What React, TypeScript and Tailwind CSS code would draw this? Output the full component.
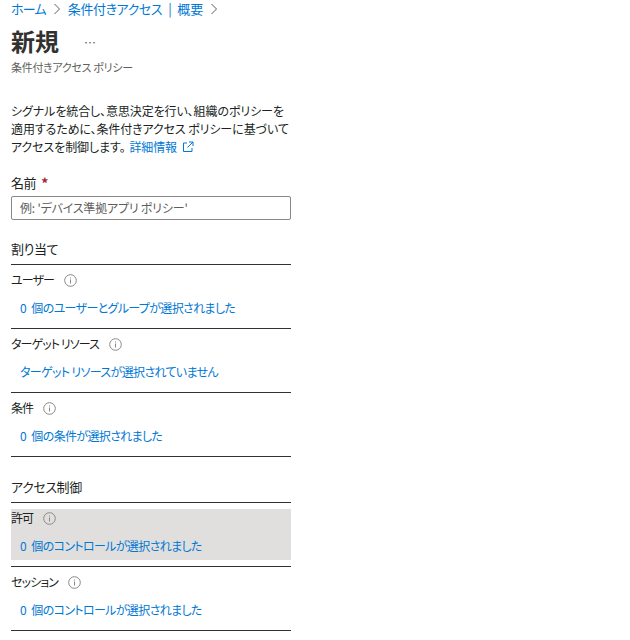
import React from 'react';

const InfoIcon = () => (
  <svg width="13" height="13" viewBox="0 0 13 13" fill="none" className="shrink-0">
    <circle cx="6.5" cy="6.5" r="5.8" stroke="#8a8886" strokeWidth="1" />
    <rect x="6" y="5.5" width="1" height="4" fill="#8a8886" />
    <rect x="6" y="3.5" width="1" height="1" fill="#8a8886" />
  </svg>
);

const Chevron = ({ className }: { className: string }) => (
  <svg width="8" height="12" viewBox="0 0 8 12" fill="none" className={className}>
    <path d="M1.5 1l5 5-5 5" stroke="#605e5c" />
  </svg>
);

const Row = ({ label, value, active }: { label: string; value: string; active?: boolean }) => (
  <div className="h-[64px] border-b border-[#323130] pt-[6px]">
    <div className={active ? 'h-[51px] bg-[#e1dfdd]' : 'h-[51px]'}>
      <div className="flex h-[18px] items-center text-[12px] tracking-[-0.9px] text-[#201f1e]">
        <span>{label}</span>
        <span className="ml-[10px]"><InfoIcon /></span>
      </div>
      <div className="mt-[9px] whitespace-pre pl-[9px] text-[12px] tracking-[-0.65px] text-[#0078d4]">{value}</div>
    </div>
  </div>
);

export default function App() {
  return (
    <div className="h-[640px] w-[630px] overflow-hidden bg-white pl-[11px] text-[13px] leading-[20px] tracking-[-0.4px] [font-family:'Noto_Sans_CJK_JP',sans-serif] [font-feature-settings:'palt']">
      <div className="w-[280px]">
        <nav className="flex h-[18px] items-center text-[#0078d4]">
          <span className="tracking-[-0.8px]">ホーム</span>
          <Chevron className="ml-[7px] mr-[7px]" />
          <span>条件付きアクセス</span>
          <span className="mx-[6px]">|</span>
          <span className="tracking-normal">概要</span>
          <Chevron className="ml-[7px]" />
        </nav>
        <div className="mt-[7px] flex h-[32px] items-center">
          <h1 className="text-[24px] font-bold leading-[32px] tracking-normal text-[#323130]">新規</h1>
          <span className="ml-[25px] mt-[3px] text-[12px] tracking-normal text-[#605e5c]">…</span>
        </div>
        <div className="mt-[2px] text-[11px] leading-[16px] tracking-[-0.3px] text-[#605e5c]">条件付きアクセス ポリシー</div>
        <p className="mt-[27px] whitespace-nowrap text-[12px] leading-[18px] tracking-[-0.1px] text-[#201f1e]">
          シグナルを統合し、意思決定を行い、組織のポリシーを<br />
          適用するために、条件付きアクセス ポリシーに基づいて<br />
          アクセスを制御します。
          <a className="ml-[4px] text-[#0078d4]">詳細情報</a>
          <svg width="12" height="12" viewBox="0 0 12 12" fill="none" className="ml-[5px] inline-block align-[-1px]">
            <path d="M5 2H1.5v8.5H10V7M7 1h4v4M11 1L5.5 6.5" stroke="#0078d4" />
          </svg>
        </p>
        <div className="mt-[17px] flex items-center text-[#201f1e]">
          <span>名前</span>
          <span className="ml-[5px] text-[14px] font-bold text-[#a4262c]">*</span>
        </div>
        <div className="mt-[3px] flex h-[24px] items-center rounded-[2px] border border-[#8a8886] pl-[8px] text-[12px] tracking-[-0.2px] text-[#605e5c]">例: 'デバイス準拠アプリ ポリシー'</div>
        <div className="mt-[19px] h-[26px] border-b border-[#323130] text-[#201f1e]">割り当て</div>
        <Row label="ユーザー" value={'0\u2002個のユーザーとグループが選択されました'} />
        <Row label="ターゲット リソース" value="ターゲット リソースが選択されていません" />
        <Row label="条件" value={'0\u2002個の条件が選択されました'} />
        <div className="mt-[20px] h-[26px] border-b border-[#323130] text-[#201f1e]">アクセス制御</div>
        <Row label="許可" value={'0\u2002個のコントロールが選択されました'} active />
        <Row label="セッション" value={'0\u2002個のコントロールが選択されました'} />
      </div>
    </div>
  );
}
